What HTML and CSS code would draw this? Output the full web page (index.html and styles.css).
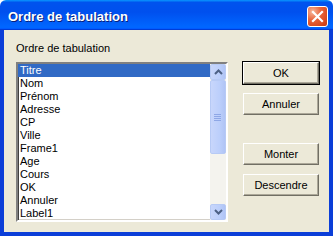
FILE: index.html
```html
<!DOCTYPE html>
<html lang="fr">
<head>
  <meta charset="UTF-8">
  <meta name="viewport" content="width=device-width, initial-scale=1.0">
  <title>Ordre de tabulation</title>
  <link rel="stylesheet" href="styles.css">
</head>
<body>
  <div class="window">
    <div class="titlebar">
      <span class="title">Ordre de tabulation</span>
      <button class="close" aria-label="Fermer">
        <svg width="13" height="13" viewBox="0 0 13 13">
          <path d="M2 2 L11 11 M11 2 L2 11" stroke="#fff" stroke-width="2.2" stroke-linecap="square" fill="none"/>
        </svg>
      </button>
    </div>

    <div class="frame">
      <div class="list-col">
        <div class="label">Ordre de tabulation</div>
        <div class="listbox">
          <ul class="items">
            <li class="selected">Titre</li>
            <li>Nom</li>
            <li>Prénom</li>
            <li>Adresse</li>
            <li>CP</li>
            <li>Ville</li>
            <li>Frame1</li>
            <li>Age</li>
            <li>Cours</li>
            <li>OK</li>
            <li>Annuler</li>
            <li>Label1</li>
          </ul>
          <div class="scrollbar">
            <div class="sb-btn">
              <svg width="9" height="6" viewBox="0 0 9 6"><path d="M1 5 L4.5 1.5 L8 5" stroke="#4d6185" stroke-width="2" fill="none"/></svg>
            </div>
            <div class="sb-thumb">
              <svg width="8" height="7" viewBox="0 0 8 7"><path d="M0 0.5 H7 M0 2.5 H7 M0 4.5 H7 M0 6.5 H7" stroke="#8ea7e6" stroke-width="1"/></svg>
            </div>
            <div class="sb-track"></div>
            <div class="sb-btn">
              <svg width="9" height="6" viewBox="0 0 9 6"><path d="M1 1 L4.5 4.5 L8 1" stroke="#4d6185" stroke-width="2" fill="none"/></svg>
            </div>
          </div>
        </div>
      </div>

      <div class="buttons">
        <button class="btn default">OK</button>
        <button class="btn">Annuler</button>
        <button class="btn spaced">Monter</button>
        <button class="btn">Descendre</button>
      </div>
    </div>
  </div>
</body>
</html>
```

FILE: styles.css
```css
body {
  margin: 0;
  background: #fff;
  font-family: 'Liberation Sans', Arial, sans-serif;
}

.window {
  width: 333px;
  height: 236px;
  display: flex;
  flex-direction: column;
}

.titlebar {
  height: 30px;
  flex: none;
  display: flex;
  align-items: center;
  justify-content: space-between;
  padding: 0 5px 0 8px;
  background: linear-gradient(180deg, #0997ff, #0053ee 8%, #0050ee 40%, #0066ff 88%, #0066ff 93%, #005bff 95%, #003dd7 96%, #003dd7);
  border-radius: 6px 6px 0 0;
}

.title {
  color: #fff;
  font-size: 13px;
  font-weight: bold;
  letter-spacing: 0;
  text-shadow: 1px 1px 0 #0a1f7a;
  padding-top: 2px;
}

.close {
  width: 21px;
  height: 21px;
  padding: 0;
  margin-top: 2px;
  border: 1px solid #fff;
  border-radius: 3px;
  background: radial-gradient(circle at 25% 25%, #f7b79c 0%, #e8653c 40%, #d94a20 75%, #c23a14 100%);
  display: flex;
  align-items: center;
  justify-content: center;
}

.frame {
  flex: 1;
  display: flex;
  background: #ece9d8;
  border: 4px solid #0b3ed8;
  border-top: none;
  padding: 12px 0 0 12px;
}

.list-col {
  width: 212px;
}

.label {
  font-size: 11px;
  line-height: 13px;
  color: #000;
}

.listbox {
  margin-top: 7px;
  height: 156px;
  display: flex;
  background: #fff;
  border: 2px solid;
  border-color: #808080 #fff #fff #808080;
  box-shadow: inset 1px 1px 0 #404040, inset -1px -1px 0 #d4d0c8;
}

.items {
  flex: 1;
  margin: 0;
  padding: 0;
  list-style: none;
}

.items li {
  height: 13px;
  line-height: 13px;
  font-size: 11px;
  padding-left: 2px;
  color: #000;
}

.items li.selected {
  background: #316ac5;
  color: #fff;
}

.scrollbar {
  width: 16px;
  display: flex;
  flex-direction: column;
  background: #f4f3ee;
}

.sb-btn,
.sb-thumb {
  box-sizing: border-box;
  display: flex;
  align-items: center;
  justify-content: center;
  background: linear-gradient(90deg, #c8d6fb, #bccffb 60%, #b0c4f5);
  border: 1px solid #b7caf5;
  border-radius: 2px;
}

.sb-btn {
  height: 16px;
}

.sb-thumb {
  height: 74px;
}

.sb-track {
  flex: 1;
}

.buttons {
  margin-left: 15px;
  padding-top: 20px;
  display: flex;
  flex-direction: column;
  gap: 9px;
}

.btn {
  width: 76px;
  height: 22px;
  padding: 0;
  font-family: 'Liberation Sans', Arial, sans-serif;
  font-size: 11px;
  color: #000;
  background: #ece9d8;
  border: 1px solid;
  border-color: #fff #716f64 #716f64 #fff;
  box-shadow: inset -1px -1px 0 #aca899;
}

.btn.default {
  outline: 1px solid #000;
  outline-offset: 0;
}

.btn.spaced {
  margin-top: 19px;
}
```
